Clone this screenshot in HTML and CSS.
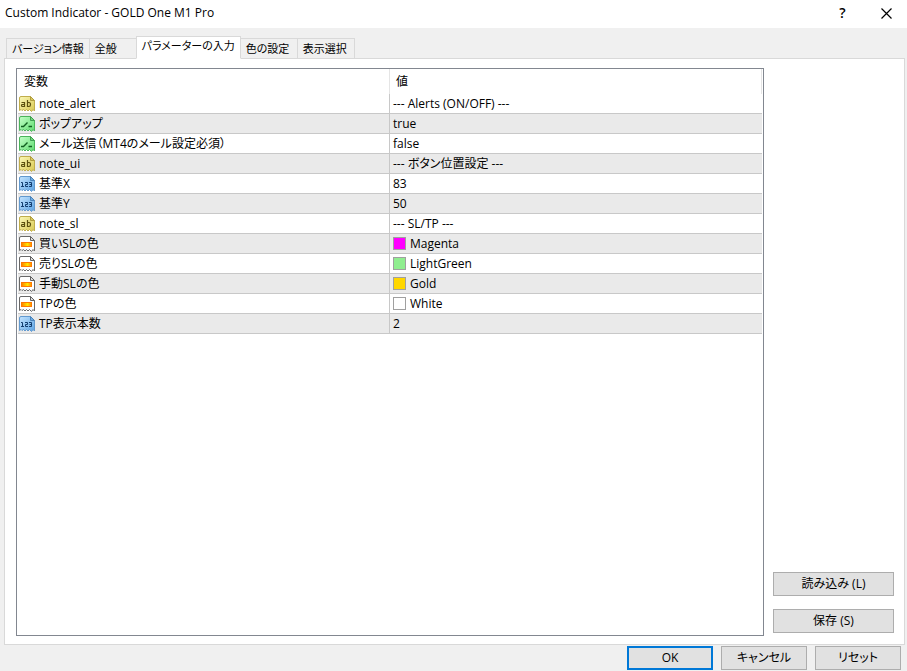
FILE: index.html
```
<!DOCTYPE html>
<html lang="ja">
<head>
    <meta charset="UTF-8">
    <meta name="viewport" content="width=device-width, initial-scale=1.0">
    <title>Custom Indicator - GOLD One M1 Pro</title>
    <link rel="stylesheet" href="styles.css">
</head>
<body>

<svg class="sprite" aria-hidden="true">
    <defs>
        <linearGradient id="fill-yellow" x1="0" y1="0" x2="1" y2="1">
            <stop offset="0" stop-color="#fbf8b8"/>
            <stop offset="1" stop-color="#d9c850"/>
        </linearGradient>
        <linearGradient id="fill-green" x1="0" y1="0" x2="1" y2="1">
            <stop offset="0" stop-color="#c4ffc8"/>
            <stop offset="1" stop-color="#5fdc70"/>
        </linearGradient>
        <linearGradient id="fill-blue" x1="0" y1="0" x2="1" y2="1">
            <stop offset="0" stop-color="#c4e4ff"/>
            <stop offset="1" stop-color="#5ba3e4"/>
        </linearGradient>
        <linearGradient id="fill-orange" x1="0" y1="0" x2="1" y2="0">
            <stop offset="0" stop-color="#ff7a00"/>
            <stop offset="0.6" stop-color="#ffe800"/>
            <stop offset="1" stop-color="#ff8a00"/>
        </linearGradient>
        <path id="sheet" d="M.5 2Q.5.5 2 .5H11.5L15.5 4.5V15L14 13.5L12.5 15.5L10.5 13.5L9 15L7.5 13.5L6 15L4.5 13.5L3 14.5L2 13.5L.5 14.5Z"/>
        <path id="fold" d="M11.5.5V4.5H15.5Z"/>
    </defs>
    <symbol id="icon-string" viewBox="0 0 16 16">
        <use href="#sheet" fill="url(#fill-yellow)" stroke="#c0ad4c"/>
        <use href="#fold" fill="#d8c860" stroke="#b09d3e"/>
        <g fill="none" stroke="#5c5010">
            <path d="M2.5 6.5H5.5V11M5.5 8.5H3.5Q2.5 8.5 2.5 9.5T3.5 10.5H5.5" stroke-width="1.2"/>
            <path d="M8.5 4V10.5H10Q11.5 10.5 11.5 8.5T10 6.5H8.5" stroke-width="1.2"/>
        </g>
    </symbol>
    <symbol id="icon-bool" viewBox="0 0 16 16">
        <use href="#sheet" fill="url(#fill-green)" stroke="#4bb45b"/>
        <use href="#fold" fill="#6ed67b" stroke="#3f9f50"/>
        <path d="M2 10.5H4.5L8.5 6.5M9.5 10.5H13" fill="none" stroke="#125f20" stroke-width="1.4"/>
    </symbol>
    <symbol id="icon-number" viewBox="0 0 16 16">
        <use href="#sheet" fill="url(#fill-blue)" stroke="#6299ce"/>
        <use href="#fold" fill="#6daee6" stroke="#4a82b8"/>
        <path d="M2 6.5H3.5V11M2 10.5H5M6 6.5H8.5V8.5H6.5V10.5H9M10 6.5H12.5V10.5H10M10.5 8.5H12.5" fill="none" stroke="#123e70"/>
    </symbol>
    <symbol id="icon-color" viewBox="0 0 16 16">
        <use href="#sheet" fill="#fff" stroke="#686868"/>
        <use href="#fold" fill="#ddd" stroke="#606060"/>
        <rect x="2.5" y="6.5" width="10" height="4" fill="url(#fill-orange)" stroke="#ff7a00"/>
    </symbol>
</svg>

<div class="dialog">
    <header class="titlebar">
        <h1>Custom Indicator - GOLD One M1 Pro</h1>
        <button type="button" class="window-button help" aria-label="ヘルプ">?</button>
        <button type="button" class="window-button close" aria-label="閉じる">
            <svg width="11" height="11" viewBox="0 0 11 11"><path d="M.5.5L10.5 10.5M10.5.5L.5 10.5" stroke="#000" stroke-width="1.2" fill="none"/></svg>
        </button>
    </header>

    <div class="tabs" role="tablist">
        <button type="button" class="tab" role="tab">バージョン情報</button>
        <button type="button" class="tab general" role="tab">全般</button>
        <button type="button" class="tab active" role="tab" aria-selected="true">パラメーターの入力</button>
        <button type="button" class="tab" role="tab">色の設定</button>
        <button type="button" class="tab" role="tab">表示選択</button>
    </div>

    <main class="panel">
        <div class="list">
            <table>
                <thead>
                    <tr><th>変数</th><th>値</th></tr>
                </thead>
                <tbody>
                    <tr>
                        <td><div class="cell"><svg class="icon"><use href="#icon-string"/></svg>note_alert</div></td>
                        <td>--- Alerts (ON/OFF) ---</td>
                    </tr>
                    <tr>
                        <td><div class="cell"><svg class="icon"><use href="#icon-bool"/></svg>ポップアップ</div></td>
                        <td>true</td>
                    </tr>
                    <tr>
                        <td><div class="cell"><svg class="icon"><use href="#icon-bool"/></svg>メール送信（MT4のメール設定必須）</div></td>
                        <td>false</td>
                    </tr>
                    <tr>
                        <td><div class="cell"><svg class="icon"><use href="#icon-string"/></svg>note_ui</div></td>
                        <td>--- ボタン位置設定 ---</td>
                    </tr>
                    <tr>
                        <td><div class="cell"><svg class="icon"><use href="#icon-number"/></svg>基準X</div></td>
                        <td>83</td>
                    </tr>
                    <tr>
                        <td><div class="cell"><svg class="icon"><use href="#icon-number"/></svg>基準Y</div></td>
                        <td>50</td>
                    </tr>
                    <tr>
                        <td><div class="cell"><svg class="icon"><use href="#icon-string"/></svg>note_sl</div></td>
                        <td>--- SL/TP ---</td>
                    </tr>
                    <tr>
                        <td><div class="cell"><svg class="icon"><use href="#icon-color"/></svg>買いSLの色</div></td>
                        <td><div class="cell"><span class="swatch magenta"></span>Magenta</div></td>
                    </tr>
                    <tr>
                        <td><div class="cell"><svg class="icon"><use href="#icon-color"/></svg>売りSLの色</div></td>
                        <td><div class="cell"><span class="swatch lightgreen"></span>LightGreen</div></td>
                    </tr>
                    <tr>
                        <td><div class="cell"><svg class="icon"><use href="#icon-color"/></svg>手動SLの色</div></td>
                        <td><div class="cell"><span class="swatch gold"></span>Gold</div></td>
                    </tr>
                    <tr>
                        <td><div class="cell"><svg class="icon"><use href="#icon-color"/></svg>TPの色</div></td>
                        <td><div class="cell"><span class="swatch white"></span>White</div></td>
                    </tr>
                    <tr>
                        <td><div class="cell"><svg class="icon"><use href="#icon-number"/></svg>TP表示本数</div></td>
                        <td>2</td>
                    </tr>
                </tbody>
            </table>
        </div>
        <div class="side">
            <button type="button" class="button">読み込み (L)</button>
            <button type="button" class="button">保存 (S)</button>
        </div>
    </main>

    <footer class="actions">
        <button type="button" class="button default">OK</button>
        <button type="button" class="button">キャンセル</button>
        <button type="button" class="button">リセット</button>
    </footer>
</div>

</body>
</html>
```
FILE: styles.css
```
* {
    box-sizing: border-box;
}
body {
    margin: 0;
    background-color: #f0f0f0;
    color: #000;
}
body, button {
    font-family: "Open Sans", "Noto Sans CJK JP", sans-serif;
    font-size: 12px;
    line-height: 18px;
    font-feature-settings: "palt";
}
button {
    color: #000;
    cursor: pointer;
}
.sprite {
    position: absolute;
    width: 0;
    height: 0;
}
.dialog {
    display: flex;
    flex-direction: column;
    height: 100vh;
}
.titlebar {
    display: flex;
    align-items: center;
    height: 28px;
    padding: 0 0 2px 5px;
    background-color: white;
}
.titlebar h1 {
    flex: 1;
    margin: 0;
    font-size: 12px;
    font-weight: normal;
}
.window-button {
    display: flex;
    align-items: center;
    justify-content: center;
    width: 45px;
    height: 26px;
    padding: 0;
    border: none;
    background: none;
}
.window-button.close {
    width: 42px;
}
.window-button.help {
    font-size: 14px;
    font-weight: 600;
}
.tabs {
    display: flex;
    align-items: flex-end;
    height: 31px;
    margin-bottom: -1px;
    padding-left: 6px;
}
.tab {
    min-width: 58px;
    height: 21px;
    margin-right: -1px;
    padding: 0 5px;
    border: 1px solid #d9d9d9;
    background-color: #f0f0f0;
    font-size: 11px;
    text-align: left;
    white-space: nowrap;
}
.tab.general {
    min-width: 48px;
}
.tab.active {
    z-index: 1;
    height: 23px;
    padding-bottom: 4px;
    border-bottom-color: white;
    background-color: white;
}
.panel {
    display: flex;
    flex: 1;
    gap: 9px;
    margin: 0 2px 0 4px;
    padding: 9px 10px 8px 11px;
    border: 1px solid #d9d9d9;
    background-color: white;
}
.list {
    flex: 1;
    padding: 0 1px;
    border: 1px solid #828790;
}
table {
    width: 100%;
    table-layout: fixed;
    border-collapse: separate;
    border-spacing: 0;
}
th {
    height: 25px;
    padding: 1px 6px 0;
    border-right: 1px solid #e5e5e5;
    font-weight: normal;
    text-align: left;
}
td {
    height: 20px;
    padding: 0 3px;
    border-bottom: 1px solid #c8c8c8;
    white-space: nowrap;
}
td:first-child {
    padding-left: 1px;
    border-right: 1px solid #c8c8c8;
}
tbody tr:nth-child(even) {
    background-color: #eaeaea;
}
.cell {
    display: flex;
    align-items: center;
    gap: 4px;
}
.icon {
    width: 16px;
    height: 16px;
}
.swatch {
    width: 13px;
    height: 13px;
    border: 1px solid #a0a0a0;
}
.swatch.magenta {
    background-color: magenta;
}
.swatch.lightgreen {
    background-color: lightgreen;
}
.swatch.gold {
    background-color: gold;
}
.swatch.white {
    background-color: white;
}
.side {
    display: flex;
    flex-direction: column;
    justify-content: flex-end;
    gap: 13px;
    width: 121px;
    padding-bottom: 3px;
}
.button {
    height: 24px;
    padding: 0;
    border: 1px solid #adadad;
    background-color: #e1e1e1;
}
.button:hover {
    background-color: #e5f1fb;
}
.button.default {
    border: 2px solid #0078d7;
}
.actions {
    display: flex;
    justify-content: flex-end;
    gap: 8px;
    padding: 1px 6px;
}
.actions .button {
    width: 86px;
}
```
